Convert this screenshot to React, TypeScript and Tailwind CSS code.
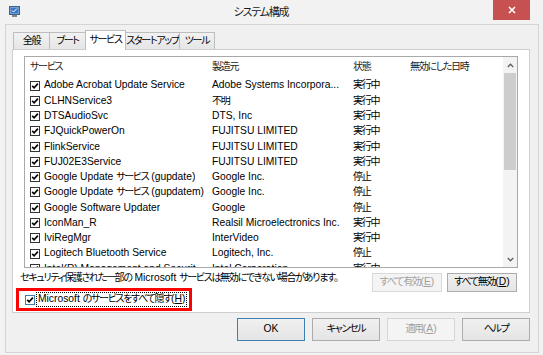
import React from "react";

const rows: [string, string, string][] = [
  ["Adobe Acrobat Update Service", "Adobe Systems Incorpora...", "実行中"],
  ["CLHNService3", "不明", "実行中"],
  ["DTSAudioSvc", "DTS, Inc", "実行中"],
  ["FJQuickPowerOn", "FUJITSU LIMITED", "実行中"],
  ["FlinkService", "FUJITSU LIMITED", "実行中"],
  ["FUJ02E3Service", "FUJITSU LIMITED", "実行中"],
  ["Google Update サービス (gupdate)", "Google Inc.", "停止"],
  ["Google Update サービス (gupdatem)", "Google Inc.", "停止"],
  ["Google Software Updater", "Google", "停止"],
  ["IconMan_R", "Realsil Microelectronics Inc.", "実行中"],
  ["IviRegMgr", "InterVideo", "実行中"],
  ["Logitech Bluetooth Service", "Logitech, Inc.", "停止"],
  ["Intel(R) Management and Security Application Local Management Service", "Intel Corporation", "実行中"],
];

const CJK = /([\u3000-\u30ff\u4e00-\u9fff\uff00-\uffef]+)/;

function T({ s }: { s: string }) {
  const parts = s.split(CJK);
  return (
    <span>
      {parts.map((p, i) =>
        i % 2 === 1 ? (
          <span key={i} className="text-[10px] tracking-[-1.3px]">
            {p}
          </span>
        ) : (
          <React.Fragment key={i}>{p}</React.Fragment>
        )
      )}
    </span>
  );
}

function Check({ blue = false }: { blue?: boolean }) {
  return (
    <span
      className={
        blue
          ? "w-[10px] h-[10px] shrink-0 border border-[#3c7fb1] bg-white flex items-center justify-center"
          : "w-[10px] h-[10px] shrink-0 border border-[#333333] bg-white flex items-center justify-center"
      }
    >
      <svg width="8" height="8" viewBox="0 0 8 8">
        <path d="M1.2 3.9 L3.1 5.9 L6.9 1.6" fill="none" stroke="#000" strokeWidth="1.6" />
      </svg>
    </span>
  );
}

function AppIcon() {
  return (
    <svg width="11" height="11" viewBox="0 0 11 11">
      <rect x="0.5" y="0.5" width="10" height="8" fill="#6f9fd8" stroke="#46607e" />
      <rect x="2" y="2" width="7" height="5" fill="#3b78c9" />
      <path d="M3 4.5 L4.5 6 L8 2.5" fill="none" stroke="#ffffff" strokeWidth="1" />
      <rect x="3" y="9" width="5" height="2" fill="#7a8796" />
    </svg>
  );
}

const tabInactive =
  "-ml-px h-[17px] border border-b-0 border-[#bdbdbd] bg-gradient-to-b from-[#f2f2f2] to-[#e5e5e5] flex items-center justify-center whitespace-nowrap";

const btn =
  "w-[68px] h-[23px] border border-[#acacac] bg-gradient-to-b from-[#f0f0f0] to-[#e5e5e5] flex items-center justify-center whitespace-nowrap";

export default function App() {
  return (
    <div className="w-[543px] h-[355px] overflow-hidden bg-[#f2f2f2] flex flex-col text-black [font-family:'Liberation_Sans','Noto_Sans_CJK_JP',sans-serif] [font-feature-settings:'palt'] text-[10.3px] leading-none">
      {/* Title bar */}
      <div className="h-[24px] shrink-0 flex">
        <div className="pl-[9px] pt-[6px]">
          <AppIcon />
        </div>
        <div className="flex-1 pl-[9px] pt-[7px] text-center text-[11px] tracking-[-1.2px] text-[#1a1a1a]">
          システム構成
        </div>
        <div className="pr-[13px]">
          <div className="w-[37px] h-[20px] bg-[#c75050] flex items-center justify-center">
            <svg width="8" height="8" viewBox="0 0 8 8">
              <path d="M1 1 L7 7 M7 1 L1 7" stroke="#ffffff" strokeWidth="1.6" />
            </svg>
          </div>
        </div>
      </div>

      {/* Client area */}
      <div className="flex-1 ml-[5px] mr-[4px] mb-[2px] border border-[#d4d4d4] bg-[#f0f0f0] flex flex-col">
        {/* Tabs */}
        <div className="pt-[5px] pl-[8px] flex items-end h-[24px]">
          <div className={tabInactive + " w-[37px]"}>
            <T s="全般" />
          </div>
          <div className={tabInactive + " w-[37px]"}>
            <T s="ブート" />
          </div>
          <div className="-ml-px relative z-10 -mb-px w-[41px] h-[20px] border border-b-0 border-[#bdbdbd] bg-white flex items-center justify-center pb-px whitespace-nowrap">
            <T s="サービス" />
          </div>
          <div className={tabInactive + " w-[55px]"}>
            <T s="スタートアップ" />
          </div>
          <div className={tabInactive + " w-[36px]"}>
            <T s="ツール" />
          </div>
        </div>

        {/* Panel */}
        <div className="ml-[6px] mr-[8px] h-[264px] border border-[#cfcfcf] bg-white pt-[6px] px-[7px] pb-px flex flex-col">
          {/* List */}
          <div className="mx-[4px] h-[212px] shrink-0 border border-[#a9a9a9] flex overflow-hidden">
            <div className="flex-1 flex flex-col overflow-hidden">
              <div className="h-[21px] shrink-0 flex items-center text-[#222]">
                <div className="w-[183px] pl-[5px] shrink-0">
                  <T s="サービス" />
                </div>
                <div className="w-[141px] pl-[4px] shrink-0">
                  <T s="製造元" />
                </div>
                <div className="w-[57px] pl-[4px] shrink-0">
                  <T s="状態" />
                </div>
                <div className="pl-[4px] whitespace-nowrap">
                  <T s="無効にした日時" />
                </div>
              </div>
              {rows.map(([name, maker, state]) => (
                <div key={name} className="h-[15.27px] shrink-0 flex items-center whitespace-nowrap">
                  <div className="w-[183px] pl-[5px] shrink-0 flex items-center gap-[4px] overflow-hidden">
                    <Check />
                    <span className="overflow-hidden text-ellipsis">
                      <T s={name} />
                    </span>
                  </div>
                  <div className="w-[141px] pl-[4px] shrink-0 overflow-hidden">
                    <T s={maker} />
                  </div>
                  <div className="w-[57px] pl-[4px] shrink-0">
                    <T s={state} />
                  </div>
                </div>
              ))}
            </div>
            {/* Scrollbar */}
            <div className="w-[14px] shrink-0 flex flex-col bg-[#f3f3f3]">
              <div className="h-[16px] shrink-0 flex items-center justify-center">
                <svg width="7" height="5" viewBox="0 0 7 5">
                  <path d="M0.8 4 L3.5 1.2 L6.2 4" fill="none" stroke="#606060" strokeWidth="1.3" />
                </svg>
              </div>
              <div className="h-[97px] shrink-0 mx-px bg-[#cdcdcd]"></div>
              <div className="flex-1"></div>
              <div className="h-[16px] shrink-0 flex items-center justify-center">
                <svg width="7" height="5" viewBox="0 0 7 5">
                  <path d="M0.8 1 L3.5 3.8 L6.2 1" fill="none" stroke="#606060" strokeWidth="1.3" />
                </svg>
              </div>
            </div>
          </div>

          {/* Bottom of panel */}
          <div className="flex justify-between">
            <div className="flex flex-col">
              <div className="h-[16px] pt-[4px] flex items-center whitespace-nowrap">
                <T s="セキュリティ保護された一部の Microsoft サービスは無効にできない場合があります。" />
              </div>
              <div className="mt-[4px] -ml-[4px] w-[176px] h-[23px] border-[3px] border-[#ff0000] flex items-center pl-[6px]">
                <Check blue />
                <span className="ml-px h-[15px] px-px border border-dotted border-[#000] flex items-center whitespace-nowrap">
                  <T s="Microsoft のサービスをすべて隠す" />
                  <span>
                    (<span className="underline">H</span>)
                  </span>
                </span>
              </div>
            </div>
            <div className="flex mt-[5px] mr-[5px] gap-[5px]">
              <div className="w-[70px] h-[19px] border border-[#d9d9d9] bg-[#f4f4f4] text-[#a0a0a0] flex items-center justify-center whitespace-nowrap">
                <T s="すべて有効" />
                <span>
                  (<span className="underline">E</span>)
                </span>
              </div>
              <div className="w-[70px] h-[19px] border border-[#acacac] bg-gradient-to-b from-[#f0f0f0] to-[#e5e5e5] flex items-center justify-center whitespace-nowrap">
                <T s="すべて無効" />
                <span>
                  (<span className="underline">D</span>)
                </span>
              </div>
            </div>
          </div>
        </div>

        {/* Dialog buttons */}
        <div className="mt-[5px] flex justify-end gap-[7px] pr-[8px]">
          <div className="w-[68px] h-[23px] border border-[#3c7fb1] bg-gradient-to-b from-[#f0f0f0] to-[#e5e5e5] flex items-center justify-center">
            OK
          </div>
          <div className={btn}>
            <T s="キャンセル" />
          </div>
          <div className="w-[68px] h-[23px] border border-[#d5d5d5] bg-[#f4f4f4] text-[#a0a0a0] flex items-center justify-center whitespace-nowrap">
            <T s="適用" />
            <span>
              (<span className="underline">A</span>)
            </span>
          </div>
          <div className={btn}>
            <T s="ヘルプ" />
          </div>
        </div>
      </div>
    </div>
  );
}
